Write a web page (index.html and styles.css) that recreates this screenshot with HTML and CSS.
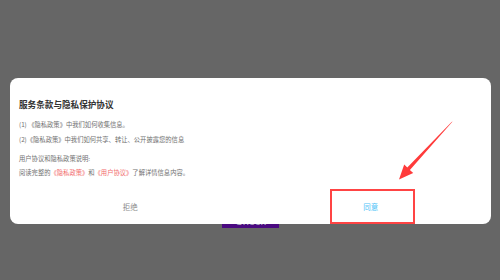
FILE: index.html
```html
<!DOCTYPE html>
<html lang="zh-CN">
<head>
<meta charset="utf-8">
<title>服务条款与隐私保护协议</title>
<link rel="stylesheet" href="styles.css">
</head>
<body>
<div class="page">
  <button class="under-btn">Check</button>
</div>
<div class="dialog">
  <div class="body">
    <h1 class="title">服务条款与隐私保护协议</h1>
    <ul class="list">
      <li>(1) 《隐私政策》中我们如何收集信息。</li>
      <li>(2)《隐私政策》中我们如何共享、转让、公开披露您的信息</li>
    </ul>
    <p class="note">用户协议和隐私政策说明:</p>
    <p class="note">阅读完整的<span class="link">《隐私政策》</span>和<span class="link">《用户协议》</span>了解详情信息内容。</p>
  </div>
  <div class="footer">
    <div class="btn reject">拒绝</div>
    <div class="btn agree">同意</div>
  </div>
</div>
<div class="mark-box"></div>
<svg class="arrow" width="500" height="280" viewBox="0 0 500 280">
  <polygon points="452.6,121.6 409.9,169.9 413.2,173.1 399,179.6 404.2,164.6 407.3,167.6 451.6,121.9" fill="#ff3b3b"/>
</svg>
</body>
</html>
```

FILE: styles.css
```css
html, body {
  margin: 0;
  padding: 0;
}
body {
  width: 500px;
  height: 280px;
  background: #666666;
  font-family: "Noto Sans CJK SC", "Noto Sans", sans-serif;
  overflow: hidden;
  position: relative;
}
.page {
  height: 280px;
  box-sizing: border-box;
  display: flex;
  justify-content: center;
  align-items: flex-end;
  padding-bottom: 52px;
  padding-left: 1px;
}
.under-btn {
  width: 57px;
  height: 17px;
  border: 0;
  padding: 0;
  background: #4a0a80;
  color: #b9b9c8;
  font-family: "Liberation Sans", sans-serif;
  font-size: 11px;
  line-height: 17px;
  padding-top: 2px;
}
.dialog {
  position: absolute;
  left: 10px;
  top: 78px;
  width: 481px;
  height: 146px;
  background: #ffffff;
  border-radius: 8px;
  display: flex;
  flex-direction: column;
}
.body {
  flex: 1;
  padding: 19.5px 9px 0;
}
.title {
  margin: 0;
  font-size: 8.6px;
  line-height: 12px;
  font-weight: bold;
  color: #333333;
}
.list {
  list-style: none;
  margin: 7px 0 0;
  padding: 0;
}
.list li {
  font-size: 6.3px;
  line-height: 15px;
  color: #707070;
}
.note {
  margin: 0;
  font-size: 6.3px;
  line-height: 14px;
  color: #707070;
}
.list + .note {
  margin-top: 5.5px;
}
.link {
  color: #f26a6a;
}
.footer {
  height: 34px;
  display: flex;
}
.btn {
  flex: 1;
  display: flex;
  align-items: center;
  justify-content: center;
  font-size: 7.5px;
  padding-bottom: 2px;
}
.reject {
  color: #8a8a8a;
}
.agree {
  color: #4fc3f7;
}
.mark-box {
  position: absolute;
  left: 330px;
  top: 189px;
  width: 85px;
  height: 35px;
  box-sizing: border-box;
  border: 2px solid #ff4444;
}
.arrow {
  position: absolute;
  left: 0;
  top: 0;
}
```
